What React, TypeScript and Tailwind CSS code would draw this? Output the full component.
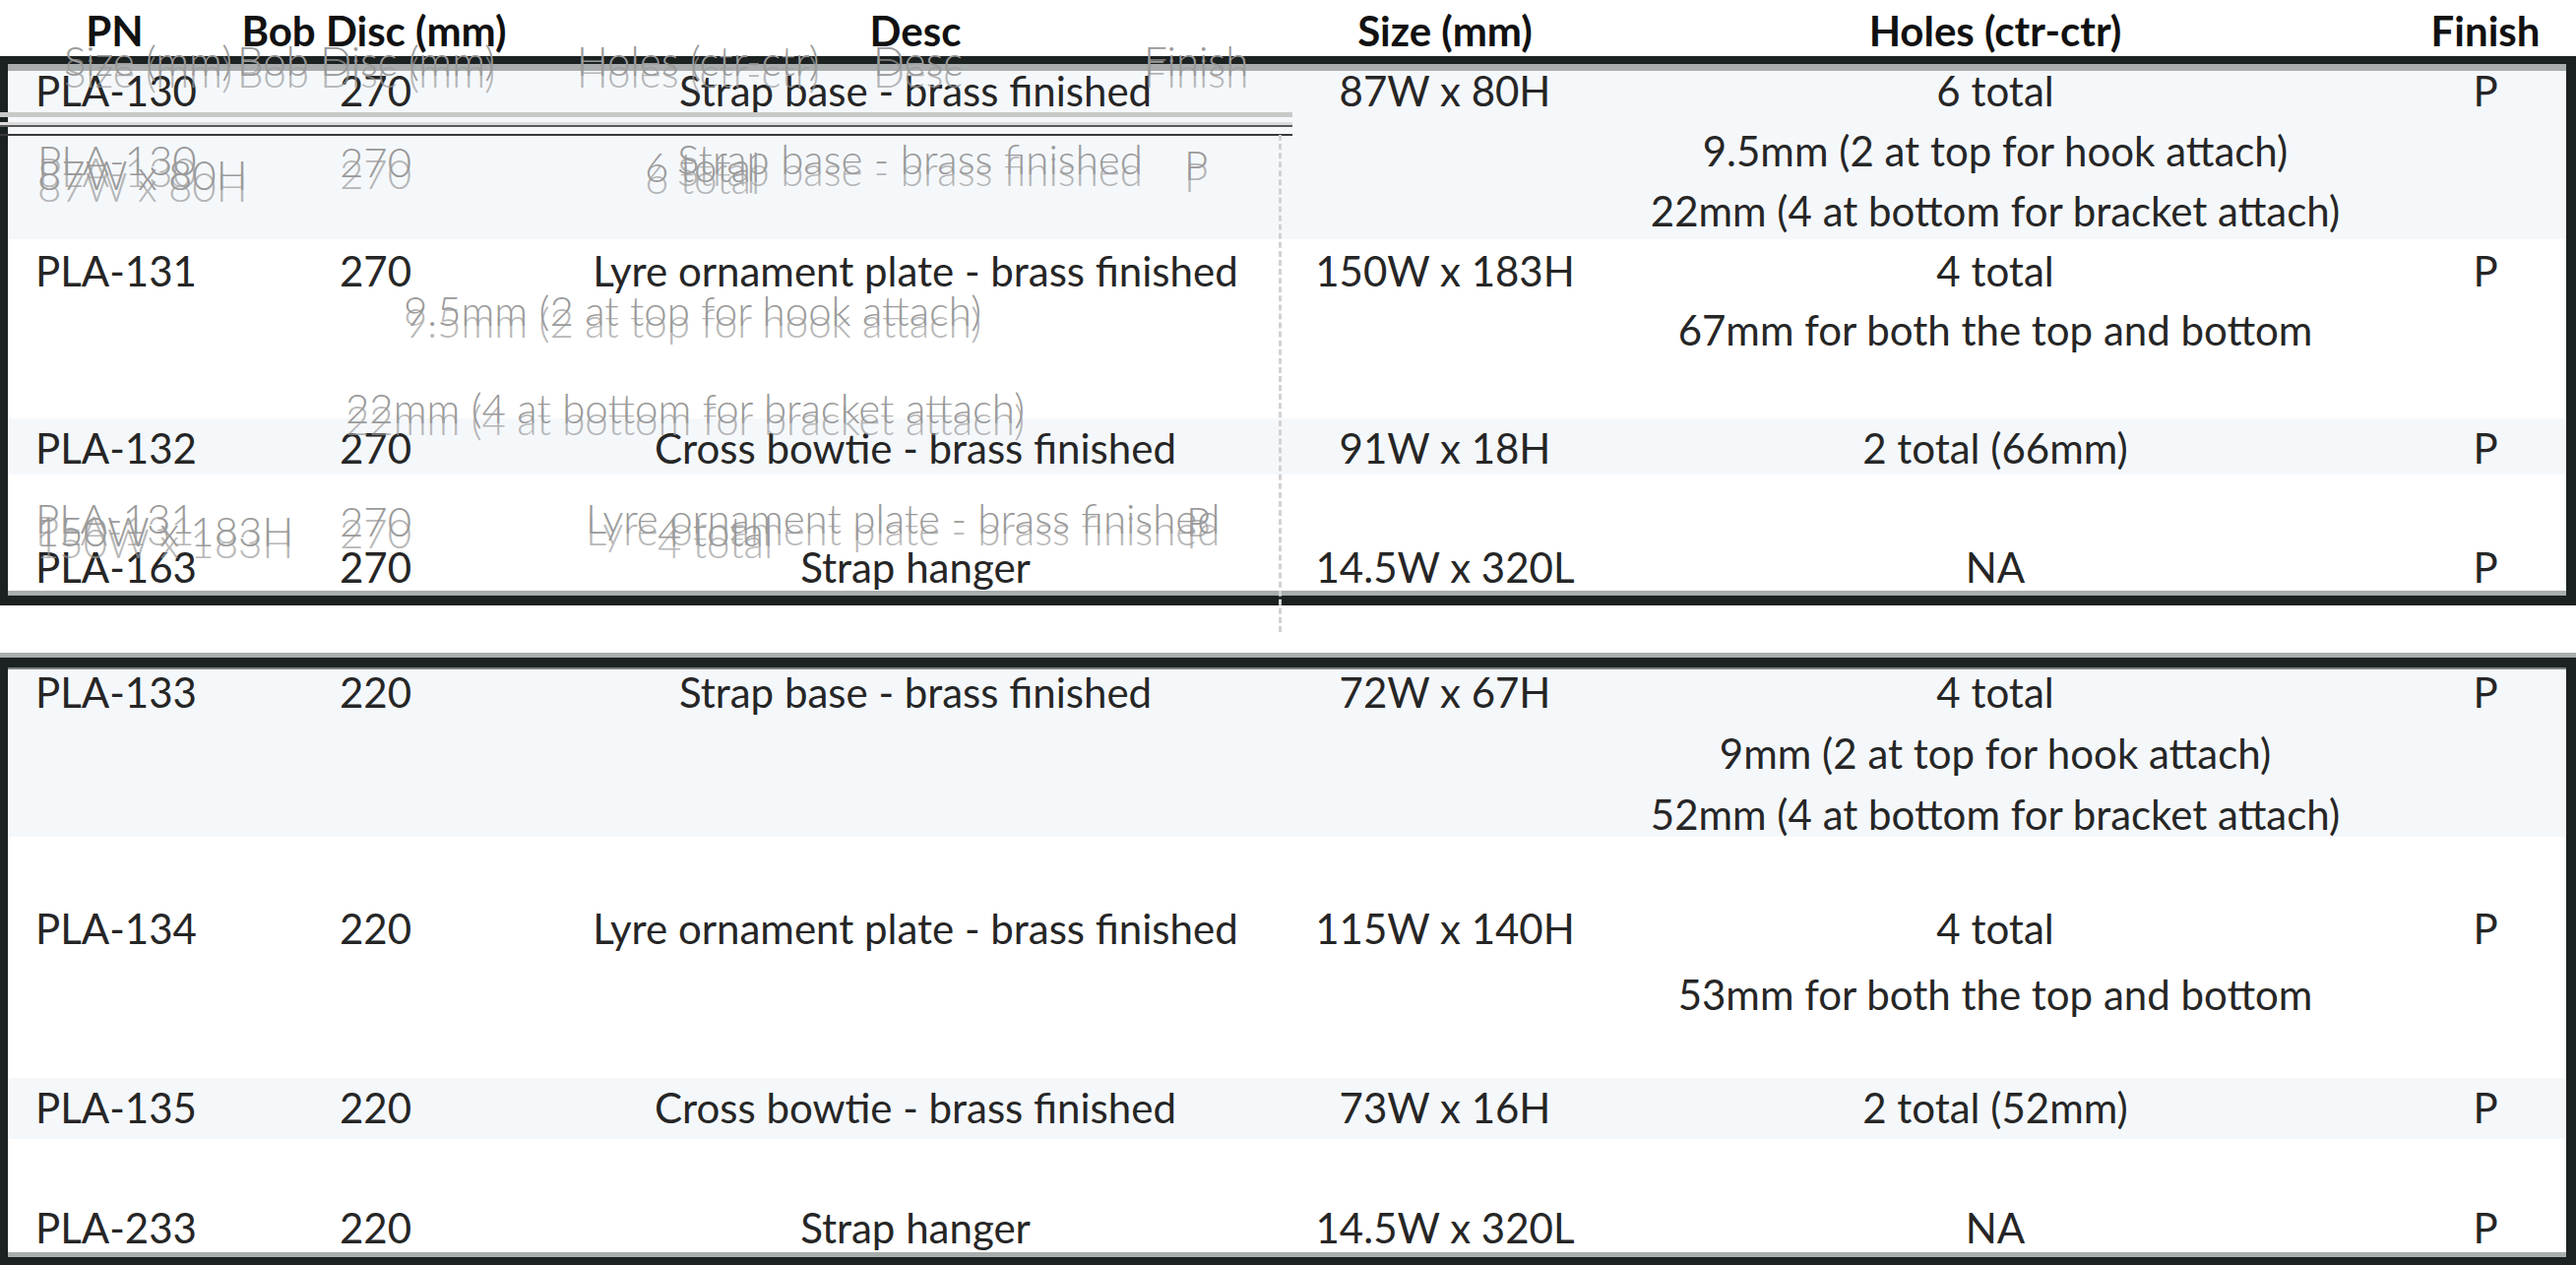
type Row = {
  pn: string;
  bob: string;
  desc: string;
  size: string;
  holes: string[];
  finish: string;
  box: string;
  cell: string;
};

const cols = "grid grid-cols-[217px_310px_790px_286px_832px_164px]";

const topRows: Row[] = [
  {
    pn: "PLA-130",
    bob: "270",
    desc: "Strap base - brass finished",
    size: "87W x 80H",
    holes: ["6 total", "9.5mm (2 at top for hook attach)", "22mm (4 at bottom for bracket attach)"],
    finish: "P",
    box: "h-[171px] bg-[#f5f8fb]",
    cell: "-mt-[10px] leading-[61px]",
  },
  {
    pn: "PLA-131",
    bob: "270",
    desc: "Lyre ornament plate - brass finished",
    size: "150W x 183H",
    holes: ["4 total", "67mm for both the top and bottom"],
    finish: "P",
    box: "h-[182px] bg-white",
    cell: "pt-[2px] leading-[60px]",
  },
  {
    pn: "PLA-132",
    bob: "270",
    desc: "Cross bowtie - brass finished",
    size: "91W x 18H",
    holes: ["2 total (66mm)"],
    finish: "P",
    box: "h-[57px] bg-[#f5f8fb]",
    cell: "pt-0 leading-[61px]",
  },
  {
    pn: "PLA-163",
    bob: "270",
    desc: "Strap hanger",
    size: "14.5W x 320L",
    holes: ["NA"],
    finish: "P",
    box: "h-[118px] bg-white",
    cell: "pt-[64px] leading-[61px]",
  },
];

const bottomRows: Row[] = [
  {
    pn: "PLA-133",
    bob: "220",
    desc: "Strap base - brass finished",
    size: "72W x 67H",
    holes: ["4 total", "9mm (2 at top for hook attach)", "52mm (4 at bottom for bracket attach)"],
    finish: "P",
    box: "h-[170px] bg-[#f5f8fb]",
    cell: "-mt-[8px] leading-[62px]",
  },
  {
    pn: "PLA-134",
    bob: "220",
    desc: "Lyre ornament plate - brass finished",
    size: "115W x 140H",
    holes: ["4 total", "53mm for both the top and bottom"],
    finish: "P",
    box: "h-[245px] bg-white",
    cell: "pt-[60px] leading-[67px]",
  },
  {
    pn: "PLA-135",
    bob: "220",
    desc: "Cross bowtie - brass finished",
    size: "73W x 16H",
    holes: ["2 total (52mm)"],
    finish: "P",
    box: "h-[62px] bg-[#f5f8fb]",
    cell: "pt-0 leading-[61px]",
  },
  {
    pn: "PLA-233",
    bob: "220",
    desc: "Strap hanger",
    size: "14.5W x 320L",
    holes: ["NA"],
    finish: "P",
    box: "h-[115px] bg-white",
    cell: "pt-[60px] leading-[61px]",
  },
];

// leftover text from a second copy of the table, bleeding through the first one
const ghosts = [
  { t: "Size (mm)", at: "left-[65px] top-[40px]" },
  { t: "Bob Disc (mm)", at: "left-[241px] top-[40px]" },
  { t: "Holes (ctr-ctr)", at: "left-[586px] top-[40px]" },
  { t: "Desc", at: "left-[887px] top-[40px]" },
  { t: "Finish", at: "left-[1162px] top-[40px]" },
  { t: "PLA-130", at: "left-[38px] top-[141px]" },
  { t: "87W x 80H", at: "left-[38px] top-[156px]" },
  { t: "270", at: "left-[345px] top-[143px]" },
  { t: "6 total", at: "left-[655px] top-[148px]" },
  { t: "Strap base - brass finished", at: "left-[688px] top-[140px]" },
  { t: "P", at: "left-[1203px] top-[146px]" },
  { t: "9.5mm (2 at top for hook attach)", at: "left-[410px] top-[294px]" },
  { t: "22mm (4 at bottom for bracket attach)", at: "left-[351px] top-[393px]" },
  { t: "PLA-131", at: "left-[36px] top-[505px]" },
  { t: "150W x 183H", at: "left-[36px] top-[518px]" },
  { t: "270", at: "left-[345px] top-[508px]" },
  { t: "Lyre ornament plate - brass finished", at: "left-[595px] top-[505px]" },
  { t: "4 total", at: "left-[668px] top-[518px]" },
  { t: "P", at: "left-[1205px] top-[508px]" },
];

function DataRow({ r }: { r: Row }) {
  return (
    <div className={`${cols} ${r.box}`}>
      <div className={`${r.cell} pl-[28px]`}>{r.pn}</div>
      <div className={`${r.cell} pl-[120px]`}>{r.bob}</div>
      <div className={`${r.cell} text-center`}>{r.desc}</div>
      <div className={`${r.cell} text-center`}>{r.size}</div>
      <div className={`${r.cell} text-center`}>
        {r.holes.map((h) => (
          <div key={h}>{h}</div>
        ))}
      </div>
      <div className={`${r.cell} text-center`}>{r.finish}</div>
    </div>
  );
}

export default function App() {
  return (
    <div className="relative w-[2617px] h-[1285px] overflow-hidden bg-white [font-family:Lato,'Liberation_Sans',sans-serif] text-[42px] text-[#262626]">
      <div className={`${cols} h-[57px] pl-[8px] pr-[10px] font-bold text-[#111] text-center pt-[3px] leading-[57px]`}>
        <div>PN</div>
        <div>Bob Disc (mm)</div>
        <div>Desc</div>
        <div>Size (mm)</div>
        <div>Holes (ctr-ctr)</div>
        <div>Finish</div>
      </div>

      <div className="border-t-[8px] border-b-[10px] border-l-[8px] border-r-[10px] border-[#1c2121]">
        <div className="h-[7px] bg-[#a9adad]" />
        {topRows.map((r) => (
          <DataRow key={r.pn} r={r} />
        ))}
        <div className="h-[5px] bg-[#a9adad]" />
      </div>

      <div className="mt-[48px] h-[5px] bg-[#a9adad]" />
      <div className="border-t-[10px] border-b-[8px] border-l-[8px] border-r-[10px] border-[#1c2121]">
        <div className="h-[2px] bg-[#7d8282]" />
        {bottomRows.map((r) => (
          <DataRow key={r.pn} r={r} />
        ))}
        <div className="h-[5px] bg-[#a9adad]" />
      </div>

      <div className="pointer-events-none absolute inset-0">
        <div className="absolute left-0 top-[114px] h-[5px] w-[1313px] bg-[#c9c9c9]" />
        <div className="absolute left-0 top-[124px] h-[3px] w-[1313px] bg-[#dcdcdc]" />
        <div className="absolute left-0 top-[127px] h-[2px] w-[1313px] bg-[#5a5a5a]" />
        <div className="absolute left-0 top-[136px] h-[2px] w-[1313px] bg-[#3a3a3a]" />
        <div className="absolute left-[1299px] top-[137px] h-[505px] border-l-[3px] border-dashed border-[#d2d2d2]" />
        {ghosts.map((g, i) => (
          <div
            key={i}
            className={`absolute ${g.at} flex flex-col whitespace-nowrap leading-[42px] font-light text-[#9a9a9a]`}
          >
            <span>{g.t}</span>
            <span className="-mt-[30px] opacity-70">{g.t}</span>
          </div>
        ))}
      </div>
    </div>
  );
}
